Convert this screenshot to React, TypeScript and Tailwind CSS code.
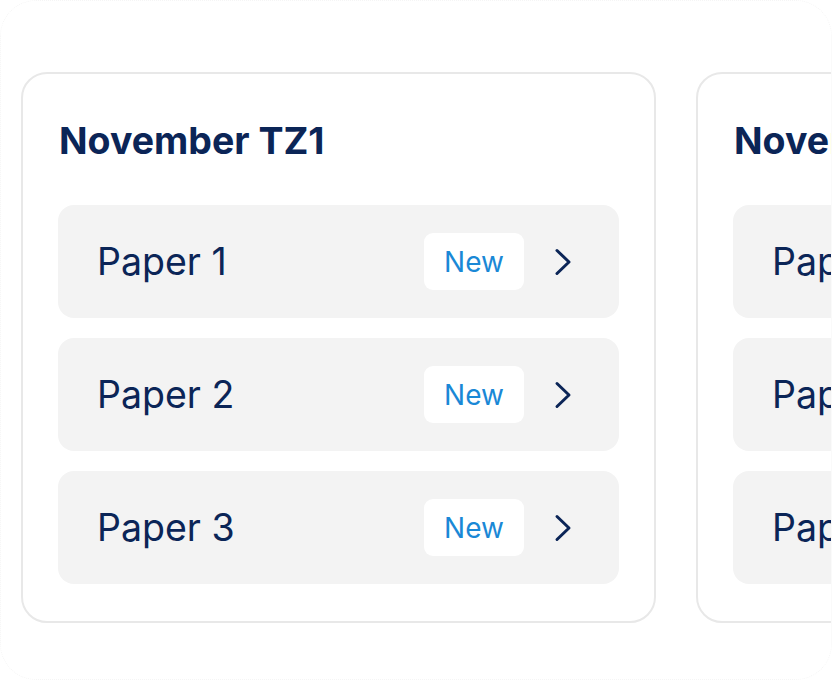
import React from "react";

const papers = ["Paper 1", "Paper 2", "Paper 3"];

function Chevron() {
  return (
    <svg width="18" height="28" viewBox="0 0 18 28" fill="none" className="shrink-0">
      <polyline
        points="3,2.5 15,14 3,25.5"
        stroke="#0b2557"
        strokeWidth="3"
        strokeLinecap="round"
        strokeLinejoin="round"
      />
    </svg>
  );
}

function Card({ title }: { title: string }) {
  return (
    <div className="w-[635px] shrink-0 rounded-[26px] border-2 border-[#e8e8e8] bg-white px-[35px] pt-[43px] pb-[37px]">
      <h2 className="pl-px text-[37.5px] font-bold leading-[48px] text-[#0b2557]">{title}</h2>
      <div className="mt-[40px] flex flex-col gap-5">
        {papers.map((p) => (
          <div
            key={p}
            className="flex h-[113px] items-center rounded-[16px] bg-[#f3f3f3] pl-[39px] pr-[47px]"
          >
            <span className="flex-1 text-[37.5px] leading-none text-[#0b2557]">{p}</span>
            <span className="flex h-[57px] w-[100px] items-center justify-center rounded-[9px] bg-white text-[28px] text-[#1a88d6]">
              New
            </span>
            <div className="ml-[30px] flex">
              <Chevron />
            </div>
          </div>
        ))}
      </div>
    </div>
  );
}

export default function App() {
  return (
    <div
      className="h-[680px] w-[832px] overflow-hidden bg-white"
      style={{ fontFamily: "Inter, 'Noto Sans', sans-serif" }}
    >
      <div className="h-[680px] w-[832px] overflow-hidden rounded-[36px] border border-dotted border-[#f5f5f5] pl-[20px] pt-[71px]">
        <div className="flex gap-10">
          <Card title="November TZ1" />
          <Card title="November TZ2" />
        </div>
      </div>
    </div>
  );
}
